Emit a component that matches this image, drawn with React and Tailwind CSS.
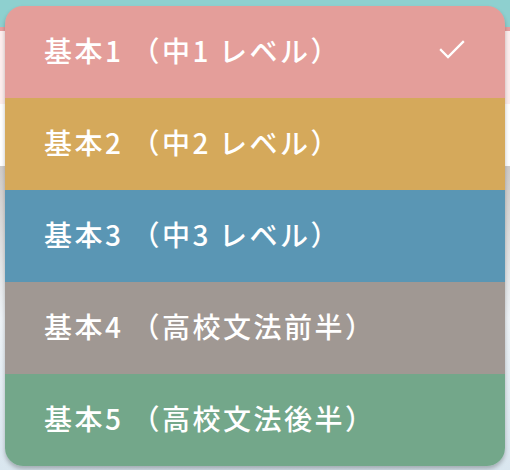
import React, { useState } from 'react'

const levels = [
  { label: '基本1（中1レベル）', bg: 'bg-[#e49e9a]' },
  { label: '基本2（中2レベル）', bg: 'bg-[#d5a95b]' },
  { label: '基本3（中3レベル）', bg: 'bg-[#5a96b4]' },
  { label: '基本4（高校文法前半）', bg: 'bg-[#a09893]' },
  { label: '基本5（高校文法後半）', bg: 'bg-[#73a78a]' },
]

function CheckMark() {
  return (
    <svg width="26" height="20" viewBox="0 0 26 20" fill="none" stroke="currentColor" strokeWidth="2.3" strokeLinecap="square">
      <polyline points="2,10 9,17 24,2" />
    </svg>
  )
}

// digits in the reference font run wider than the CJK font's
function Label({ text }) {
  return text.split(/(\d)/).map((part, i) =>
    /\d/.test(part) ? <span key={i} className="pr-[8px]">{part}</span> : part
  )
}

export default function App() {
  const [selected, setSelected] = useState(0)

  return (
    <div className="relative w-[510px] h-[470px] overflow-hidden bg-white font-['Noto_Sans_CJK_JP',sans-serif]">
      {/* page behind the menu */}
      <div className="flex flex-col h-full">
        <div className="h-[27px] bg-[#8ed0cf]"></div>
        <div className="h-[4px] bg-[#e6a0a0]"></div>
        <div className="h-[73px] bg-[#fdeeee]"></div>
        <div className="h-[62px] bg-white"></div>
        <div className="flex-1 bg-gradient-to-b from-[#cfcbc8] via-[#eef3f7] to-[#d9e6ef]"></div>
      </div>

      {/* dropdown */}
      <div className="absolute left-[5px] top-[6px] w-[500px] rounded-[18px] overflow-hidden shadow-[0_3px_4px_rgba(0,0,0,0.25)]">
        {levels.map((lv, i) => (
          <button
            key={lv.label}
            onClick={() => setSelected(i)}
            className={`w-full h-[92px] flex items-center justify-between pl-[39px] pr-[40px] pb-[4px] text-white text-[28px] leading-none font-medium tracking-[2.5px] ${lv.bg}`}
          >
            <span><Label text={lv.label} /></span>
            {selected === i && <CheckMark />}
          </button>
        ))}
      </div>
    </div>
  )
}
